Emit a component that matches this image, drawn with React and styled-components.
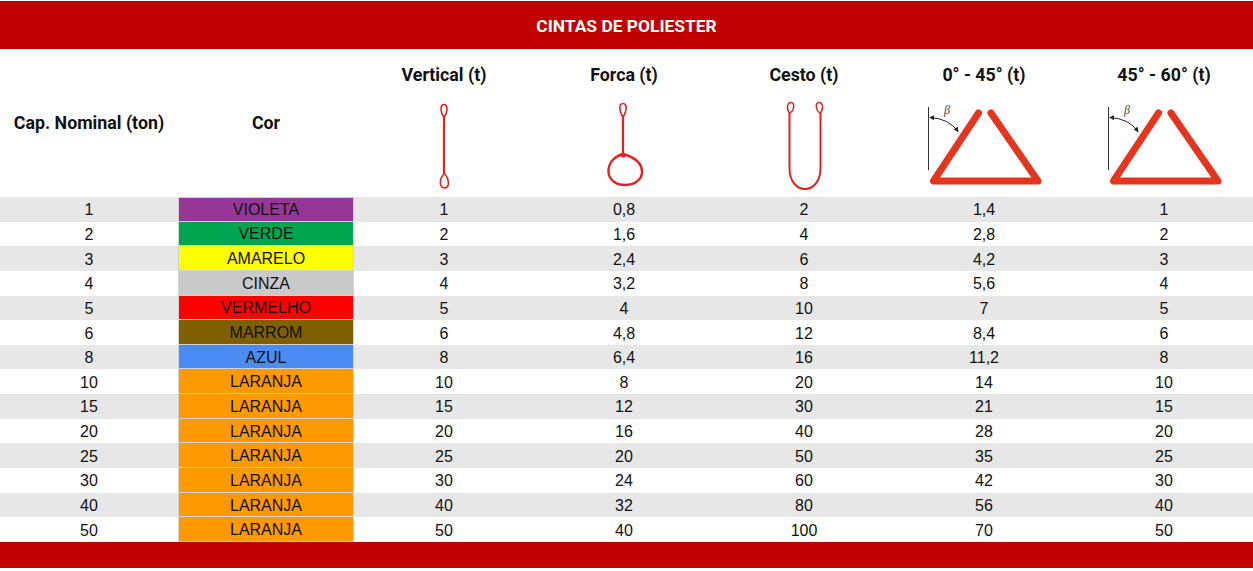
import React from "react";
import styled, { createGlobalStyle } from "styled-components";

const Global = createGlobalStyle`
  html, body { margin: 0; padding: 0; background: #ffffff; }
  body { font-family: "Liberation Sans", Arial, sans-serif; }
`;

const Page = styled.div`
  width: 1253px;
  height: 571px;
  display: flex;
  flex-direction: column;
  background: #ffffff;
  padding-top: 1px;
  box-sizing: border-box;
`;

const TitleBar = styled.div`
  height: 48px;
  background: #c00000;
  color: #ffffff;
  display: flex;
  align-items: center;
  justify-content: center;
  font-family: "Roboto", "Liberation Sans", sans-serif;
  font-weight: 700;
  font-size: 17.4px;
  padding-top: 1px;
  box-sizing: border-box;
`;

const Grid = styled.div`
  display: grid;
  grid-template-columns: 178px 176px repeat(5, 180px);
`;

const HeadCell = styled.div`
  height: 148px;
  display: flex;
  flex-direction: column;
  align-items: center;
  justify-content: ${(p) => (p.$icon ? "flex-start" : "center")};
  font-family: "Roboto", "Liberation Sans", sans-serif;
  font-weight: 700;
  font-size: 17.8px;
  color: #111111;
  box-sizing: border-box;
  padding-top: ${(p) => (p.$icon ? "16px" : "0")};
`;

const HeadTitle = styled.div`
  height: 20px;
  line-height: 20px;
  white-space: nowrap;
`;

const IconSlot = styled.svg`
  display: block;
  margin-top: 15px;
  width: 180px;
  height: 95px;
  overflow: visible;
`;

const Row = styled.div`
  display: contents;
`;

const Cell = styled.div`
  height: 24.65px;
  background: ${(p) => (p.$alt ? "#e7e7e7" : "#ffffff")};
  display: flex;
  align-items: center;
  justify-content: center;
  font-size: 16px;
  color: #111111;
  white-space: nowrap;
  padding-top: 2px;
  box-sizing: border-box;
`;

const ColorCell = styled.div`
  height: 24.65px;
  background: ${(p) => p.$bg};
  border-left: 1px solid #cfd3d8;
  border-right: 1px solid #cfd3d8;
  border-bottom: 1px solid #cfd3d8;
  border-top: ${(p) => (p.$first ? "1px solid #cfd3d8" : "0")};
  box-sizing: border-box;
  display: flex;
  align-items: center;
  justify-content: center;
  font-size: 16px;
  color: #111111;
  padding-top: 2px;
`;

const FooterBar = styled.div`
  height: 26px;
  background: #c00000;
`;

const RED = "#e32222";

const VerticalIcon = () => (
  <IconSlot viewBox="0 0 180 95">
    <path d="M90 4.5 C86 4.5 86 12 90 17.5 C94 12 94 4.5 90 4.5 Z" fill="none" stroke={RED} strokeWidth="1.6" />
    <line x1="90" y1="17" x2="90" y2="73.5" stroke={RED} strokeWidth="2.2" />
    <path d="M90.3 73.5 C85 79 85 88 90.5 88 C96 88 95.5 79 90.3 73.5 Z" fill="none" stroke={RED} strokeWidth="1.6" />
  </IconSlot>
);

const ForcaIcon = () => (
  <IconSlot viewBox="0 0 180 95">
    <path d="M89 3.5 C84.5 3.5 85 11 89 17.5 C93 11 93.5 3.5 89 3.5 Z" fill="none" stroke={RED} strokeWidth="1.6" />
    <line x1="89" y1="17" x2="89" y2="53" stroke={RED} strokeWidth="2.2" />
    <path
      d="M89 54 C79 57 74 64 74.5 72 C75 80 82 85 91 85 C100 85 108 80 108 72 C108 63 100 57 89 54 Z"
      fill="none"
      stroke={RED}
      strokeWidth="2.4"
    />
    <circle cx="89" cy="55" r="2.6" fill={RED} />
  </IconSlot>
);

const CestoIcon = () => (
  <IconSlot viewBox="0 0 180 95">
    <path d="M77 2.5 C72.5 2.5 72.5 10 75.8 13 C80 11 81.5 2.5 77 2.5 Z" fill="none" stroke={RED} strokeWidth="1.5" />
    <path d="M105 2.5 C109.5 2.5 109.5 10 106.2 13 C102 11 100.5 2.5 105 2.5 Z" fill="none" stroke={RED} strokeWidth="1.5" />
    <path
      d="M75.5 12.5 L75.5 68 C75.5 96 106.5 96 106.5 68 L106.5 12.5"
      fill="none"
      stroke={RED}
      strokeWidth="2"
    />
  </IconSlot>
);

const AngleIcon = ({ id }) => (
  <IconSlot viewBox="0 0 180 95">
    <defs>
      <marker id={`ah-${id}`} viewBox="0 0 6 6" refX="5" refY="3" markerWidth="5" markerHeight="5" orient="auto-start-reverse">
        <path d="M0 0 L6 3 L0 6 Z" fill="#222" />
      </marker>
    </defs>
    <line x1="34.5" y1="7" x2="34.5" y2="70" stroke="#333" strokeWidth="1" />
    <path
      d="M36 17.5 Q55 18.5 64 31.5"
      fill="none"
      stroke="#222"
      strokeWidth="1"
      markerStart={`url(#ah-${id})`}
      markerEnd={`url(#ah-${id})`}
    />
    <text x="50" y="14" fontSize="12" fontStyle="italic" fontWeight="400" fontFamily="'Liberation Serif', serif" fill="#444">
      β
    </text>
    <path
      d="M84.5 13 L39.5 81 L144 81 L97 13"
      fill="none"
      stroke="#e2361f"
      strokeWidth="7"
      strokeLinejoin="round"
      strokeLinecap="round"
    />
  </IconSlot>
);

const rows = [
  ["1", "VIOLETA", "#963696", "1", "0,8", "2", "1,4", "1"],
  ["2", "VERDE", "#00a550", "2", "1,6", "4", "2,8", "2"],
  ["3", "AMARELO", "#ffff00", "3", "2,4", "6", "4,2", "3"],
  ["4", "CINZA", "#c9c9c9", "4", "3,2", "8", "5,6", "4"],
  ["5", "VERMELHO", "#ff0000", "5", "4", "10", "7", "5"],
  ["6", "MARROM", "#7f6000", "6", "4,8", "12", "8,4", "6"],
  ["8", "AZUL", "#4a8bf4", "8", "6,4", "16", "11,2", "8"],
  ["10", "LARANJA", "#ff9900", "10", "8", "20", "14", "10"],
  ["15", "LARANJA", "#ff9900", "15", "12", "30", "21", "15"],
  ["20", "LARANJA", "#ff9900", "20", "16", "40", "28", "20"],
  ["25", "LARANJA", "#ff9900", "25", "20", "50", "35", "25"],
  ["30", "LARANJA", "#ff9900", "30", "24", "60", "42", "30"],
  ["40", "LARANJA", "#ff9900", "40", "32", "80", "56", "40"],
  ["50", "LARANJA", "#ff9900", "50", "40", "100", "70", "50"],
];

export default function App() {
  return (
    <>
      <Global />
      <Page>
        <TitleBar>CINTAS DE POLIESTER</TitleBar>
        <Grid>
          <HeadCell>
            <HeadTitle>Cap. Nominal (ton)</HeadTitle>
          </HeadCell>
          <HeadCell>
            <HeadTitle>Cor</HeadTitle>
          </HeadCell>
          <HeadCell $icon>
            <HeadTitle>Vertical (t)</HeadTitle>
            <VerticalIcon />
          </HeadCell>
          <HeadCell $icon>
            <HeadTitle>Forca (t)</HeadTitle>
            <ForcaIcon />
          </HeadCell>
          <HeadCell $icon>
            <HeadTitle>Cesto (t)</HeadTitle>
            <CestoIcon />
          </HeadCell>
          <HeadCell $icon>
            <HeadTitle>0° - 45° (t)</HeadTitle>
            <AngleIcon id="a" />
          </HeadCell>
          <HeadCell $icon>
            <HeadTitle>45° - 60° (t)</HeadTitle>
            <AngleIcon id="b" />
          </HeadCell>
          {rows.map((r, i) => {
            const alt = i % 2 === 0;
            return (
              <Row key={i}>
                <Cell $alt={alt}>{r[0]}</Cell>
                <ColorCell $bg={r[2]} $first={i === 0}>{r[1]}</ColorCell>
                <Cell $alt={alt}>{r[3]}</Cell>
                <Cell $alt={alt}>{r[4]}</Cell>
                <Cell $alt={alt}>{r[5]}</Cell>
                <Cell $alt={alt}>{r[6]}</Cell>
                <Cell $alt={alt}>{r[7]}</Cell>
              </Row>
            );
          })}
        </Grid>
        <FooterBar />
      </Page>
    </>
  );
}
